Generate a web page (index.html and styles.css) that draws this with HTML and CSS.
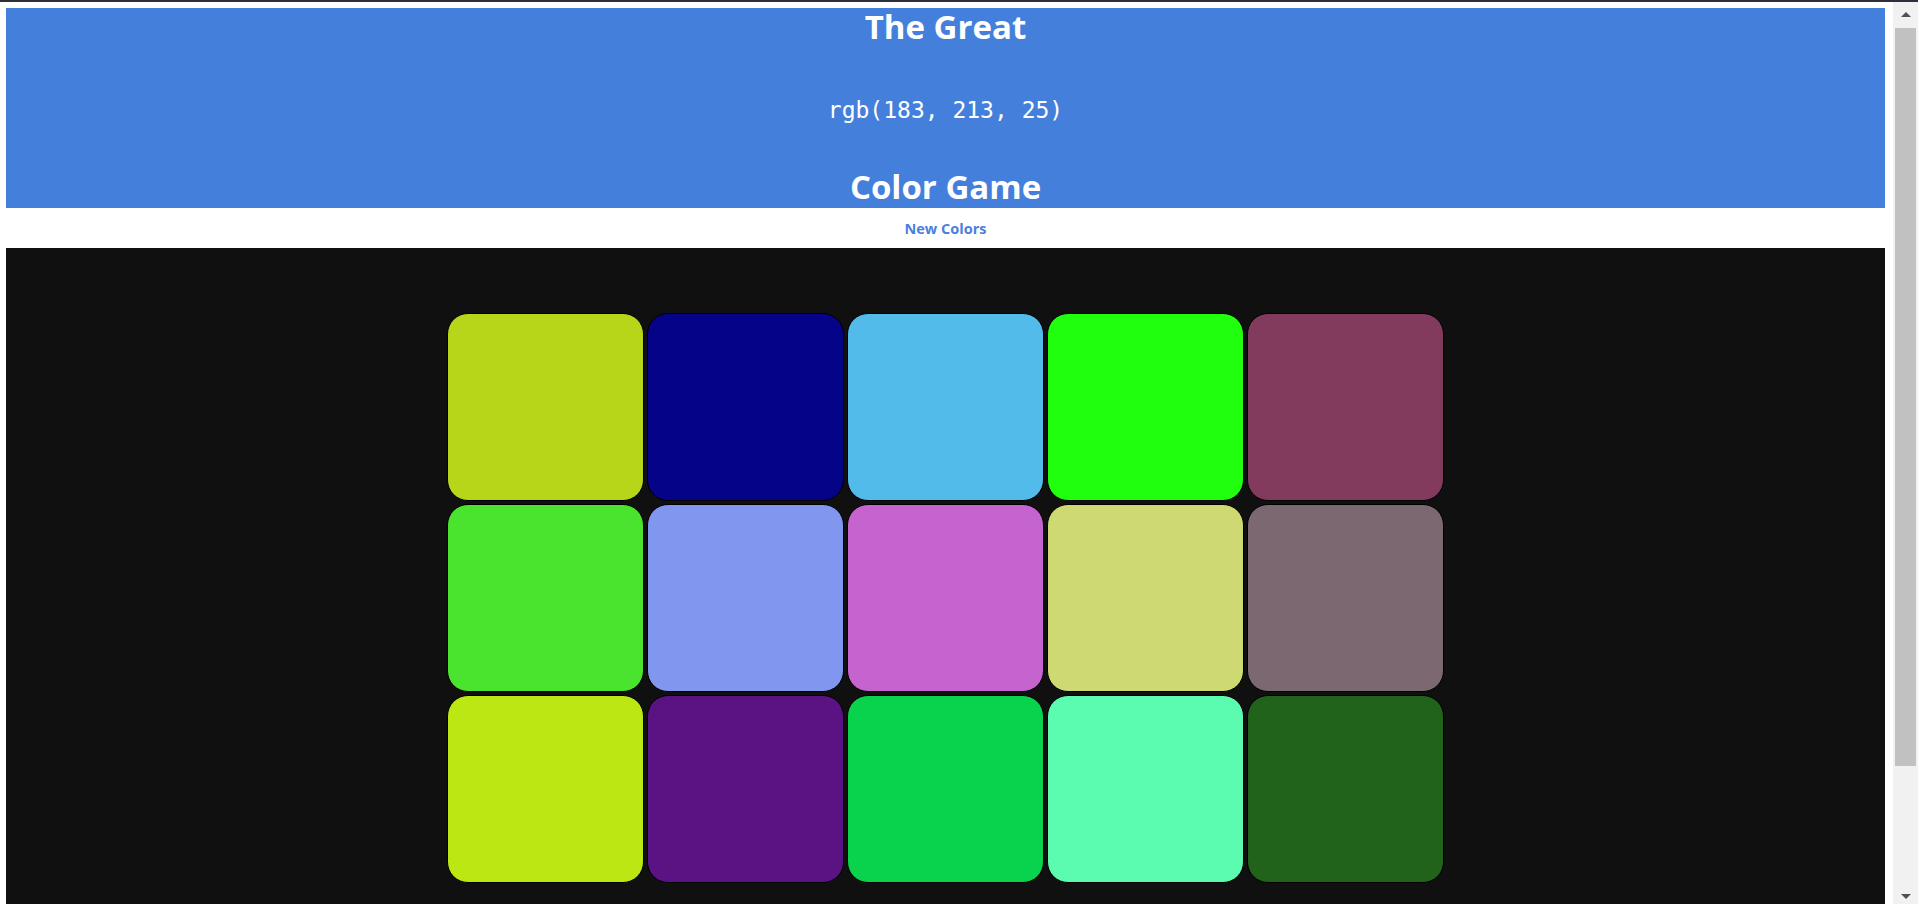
FILE: index.html
```html
<!DOCTYPE html>
<html lang="en">
<head>
<meta charset="utf-8">
<title>Color Game</title>
<link rel="stylesheet" href="styles.css">
</head>
<body>
<div class="topline"></div>
<div class="window">
  <div class="page">
    <header class="hero">
      <div class="title t1">The Great</div>
      <div class="rgb">rgb(183, 213, 25)</div>
      <div class="title t3">Color Game</div>
    </header>
    <div class="stripe">
      <button class="newbtn">New Colors</button>
    </div>
    <main class="board">
      <div class="grid">
        <div class="tile" style="background:#b7d519"></div>
        <div class="tile" style="background:#050388"></div>
        <div class="tile" style="background:#52bbea"></div>
        <div class="tile" style="background:#1fff0e"></div>
        <div class="tile" style="background:#823b5d"></div>
        <div class="tile" style="background:#4ae32e"></div>
        <div class="tile" style="background:#8197ef"></div>
        <div class="tile" style="background:#c564ce"></div>
        <div class="tile" style="background:#cfd971"></div>
        <div class="tile" style="background:#7b6870"></div>
        <div class="tile" style="background:#bbe712"></div>
        <div class="tile" style="background:#5b1283"></div>
        <div class="tile" style="background:#09d24c"></div>
        <div class="tile" style="background:#5cfcb0"></div>
        <div class="tile" style="background:#22631c"></div>
      </div>
    </main>
  </div>
  <div class="scrollbar">
    <div class="arrow up"></div>
    <div class="thumb"></div>
    <div class="track-rest"></div>
    <div class="arrow down"></div>
  </div>
</div>
</body>
</html>
```
FILE: styles.css
```css
html, body {
  margin: 0;
  padding: 0;
  height: 904px;
  overflow: hidden;
  background: #fff;
}

body {
  display: flex;
  flex-direction: column;
  font-family: "Open Sans", "Noto Sans", sans-serif;
}

.topline {
  height: 2px;
  background: #2d2f3b;
  flex: none;
}

.window {
  flex: 1;
  display: flex;
  min-height: 0;
}

.page {
  flex: 1;
  min-width: 0;
  overflow: hidden;
  padding: 6px 8px 0 6px;
  display: flex;
  flex-direction: column;
}

.hero {
  height: 200px;
  flex: none;
  background: #4480db;
  color: #fff;
  display: flex;
  flex-direction: column;
  align-items: center;
}

.title {
  font-weight: 700;
  font-size: 33px;
  line-height: 38px;
  height: 38px;
}

.rgb {
  margin-top: 49px;
  font-family: "DejaVu Sans Mono", monospace;
  font-size: 23px;
  line-height: 30px;
  height: 30px;
}

.t3 {
  margin-top: 43px;
}

.stripe {
  height: 40px;
  flex: none;
  display: flex;
  align-items: center;
  justify-content: center;
}

.newbtn {
  border: none;
  background: none;
  padding: 0;
  font-family: "Open Sans", sans-serif;
  font-weight: 700;
  font-size: 14.5px;
  color: #4a80dc;
  cursor: pointer;
}

.board {
  flex: 1;
  background: #101010;
  padding-top: 65px;
  display: flex;
  justify-content: center;
  align-items: flex-start;
}

.grid {
  display: grid;
  grid-template-columns: repeat(5, 197.5px);
  grid-auto-rows: 187.5px;
  column-gap: 2.5px;
  row-gap: 3.5px;
}

.tile {
  box-sizing: border-box;
  border: 1.5px solid #000;
  border-radius: 21px;
}

.scrollbar {
  width: 25px;
  flex: none;
  background: #f1f1f1;
  display: flex;
  flex-direction: column;
  align-items: center;
}

.arrow {
  width: 0;
  height: 0;
  border-left: 5.5px solid transparent;
  border-right: 5.5px solid transparent;
  flex: none;
}

.arrow.up {
  border-bottom: 5px solid #505050;
  margin-top: 10px;
  margin-bottom: 11px;
}

.arrow.down {
  border-top: 5px solid #505050;
  margin-bottom: 5px;
}

.thumb {
  width: 21px;
  height: 738px;
  background: #c1c1c1;
  flex: none;
}

.track-rest {
  flex: 1;
}
```
